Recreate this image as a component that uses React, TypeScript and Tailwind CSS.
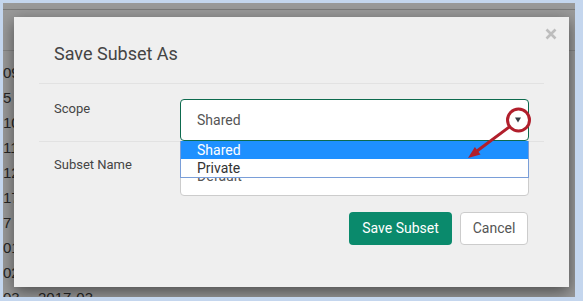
import React from "react";

const bgRows = ["09", "5 -", "10", "11", "12", "17", "7 -", "01", "02", "03 -- 2017-03"];

export default function App() {
  return (
    <div className="relative w-[583px] h-[301px] bg-[#c4d6ee] pt-[3px] pl-[3px] pr-[8px] pb-[4px] font-['Roboto',sans-serif]">
      <div className="relative w-full h-full bg-[#9a9a9a] overflow-hidden">
        {/* background page under backdrop */}
        <div className="flex flex-col">
          <div className="h-[7px] border-b border-[#7b7b7b]" />
          <div className="h-[41px] border-b border-[#868686]" />
          <div className="flex flex-col pt-[9px] font-['Liberation_Sans',sans-serif] text-[15px] leading-[25px] text-[#262626]">
            {bgRows.map((t, i) => (
              <div key={i} className="h-[25px] whitespace-nowrap">
                {t}
              </div>
            ))}
          </div>
        </div>

        {/* modal */}
        <div className="absolute left-[11px] top-[14px] w-[555px] h-[270px] bg-[#efefef] shadow-[0_5px_15px_rgba(0,0,0,0.5)] px-[25px]">
          <div className="relative h-[67px] border-b border-[#e2e2e2]">
            <div className="pt-[25px] pl-[15px] text-[18px] leading-[24px] text-[#444]">Save Subset As</div>
            <svg className="absolute right-[-13px] top-[11px]" width="12" height="12" viewBox="0 0 12 12">
              <path d="M1.5 1.5 L10.5 10.5 M10.5 1.5 L1.5 10.5" stroke="#bdbdbd" strokeWidth="2.6" strokeLinecap="butt" />
            </svg>
          </div>

          <div className="relative z-10 flex px-[15px] pt-[15px] border-b border-[#e2e2e2]">
            <div className="w-[126px] mt-[1px] text-[13px] leading-[18px] text-[#444]">Scope</div>
            <div className="relative flex-1">
              <div className="h-[42px] flex items-center justify-between pl-[16px] pr-[7px] bg-white border border-[#0d6a4e] rounded-[4px] text-[14px] text-[#555]">
                <span>Shared</span>
                <svg width="6" height="6" viewBox="0 0 6 6">
                  <path d="M0 0.5 L6 0.5 L3 5.5 Z" fill="#333b44" />
                </svg>
              </div>
              <div className="absolute left-0 right-0 top-[42px] bg-white border-x border-b border-[#7a9ed8] text-[14px] leading-[18px]">
                <div className="h-[18px] bg-[#1e90ff] text-white pl-[16px]">Shared</div>
                <div className="h-[18px] text-[#333] pl-[16px]">Private</div>
              </div>
            </div>
          </div>

          <div className="flex px-[15px] pt-[14px]">
            <div className="w-[126px] text-[13px] leading-[18px] text-[#444]">Subset Name</div>
            <div className="flex-1 h-[40px] flex items-center pl-[16px] bg-white border border-[#cccccc] rounded-[4px] text-[14px] text-[#555]">
              Default
            </div>
          </div>

          <div className="flex justify-end gap-[8px] pr-[16px] mt-[16px]">
            <div className="w-[103px] h-[33px] flex items-center justify-center bg-[#0a8a6c] rounded-[4px] text-[14px] text-white">
              Save Subset
            </div>
            <div className="w-[68px] h-[33px] flex items-center justify-center bg-white border border-[#cccccc] rounded-[4px] text-[14px] text-[#555]">
              Cancel
            </div>
          </div>
        </div>
      </div>

      {/* annotation */}
      <svg className="absolute left-0 top-0 z-20 pointer-events-none" width="583" height="301" viewBox="0 0 583 301">
        <circle cx="518.5" cy="120" r="11" fill="none" stroke="#b11f2c" strokeWidth="3" />
        <line x1="509.7" y1="126.6" x2="477" y2="151" stroke="#b11f2c" strokeWidth="3" />
        <polygon points="468,158 480.5,154.6 474.9,147" fill="#b11f2c" />
      </svg>
    </div>
  );
}
